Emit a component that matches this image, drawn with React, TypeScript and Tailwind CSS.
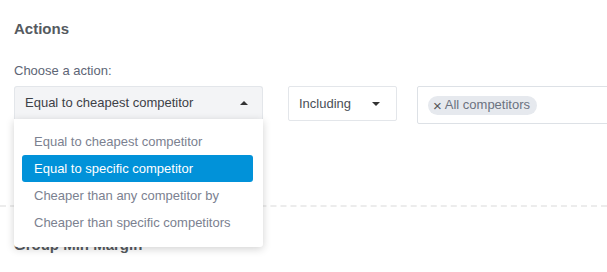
import React from 'react'

const options = [
  'Equal to cheapest competitor',
  'Equal to specific competitor',
  'Cheaper than any competitor by',
  'Cheaper than specific competitors',
]

export default function App() {
  return (
    <div className="w-[607px] h-[272px] overflow-hidden bg-white font-['Liberation_Sans',Arial,sans-serif]">
      <section className="px-[14px] pt-[19px]">
        <h2 className="text-[15px] font-bold text-[#555a60] leading-[20px]">Actions</h2>

        <p className="mt-[24px] text-[13px] text-[#5d6575] leading-[16px]">Choose a action:</p>

        <div className="mt-[7px] flex items-start">
          {/* action select with open menu */}
          <div className="relative w-[249px] shrink-0">
            <div className="h-[33px] flex items-center justify-between pl-[10px] pr-[14px] bg-[#f3f4f6] border border-[#e3e6ea] border-b-0 rounded-t-[3px] text-[13px] text-[#3d4147]">
              <span>Equal to cheapest competitor</span>
              <span className="w-0 h-0 border-l-[4px] border-r-[4px] border-b-[4px] border-l-transparent border-r-transparent border-b-[#333]"></span>
            </div>
            <ul className="absolute left-0 top-[33px] w-[249px] bg-white rounded-b-[3px] shadow-[0_2px_8px_rgba(0,0,0,0.18)] pl-[8px] pr-[10px] pt-[9px] pb-[11px] z-10">
              {options.map((o, i) => (
                <li
                  key={o}
                  className={
                    i === 1
                      ? 'h-[27px] flex items-center pl-[12px] rounded-[3px] bg-[#0192d9] text-white text-[13px]'
                      : 'h-[27px] flex items-center pl-[12px] text-[13px] text-[#7b8190]'
                  }
                >
                  {o}
                </li>
              ))}
            </ul>
          </div>

          <div className="ml-[25px] w-[109px] shrink-0 h-[35px] flex items-center justify-between pl-[10px] pr-[16px] border border-[#e3e6ea] rounded-[2px] text-[13px] text-[#4a4f57]">
            <span>Including</span>
            <span className="w-0 h-0 border-l-[4px] border-r-[4px] border-t-[4px] border-l-transparent border-r-transparent border-t-[#333]"></span>
          </div>

          <div className="ml-[20px] w-[220px] shrink-0 h-[38px] flex items-center pl-[10px] border border-[#dde1e6] rounded-[2px]">
            <span className="h-[19px] flex items-center gap-[3px] pl-[5px] pr-[7px] rounded-full bg-[#e6e9ee] text-[13px] text-[#6b7280]">
              <span className="text-[15px] leading-none text-[#555]">×</span>
              All competitors
            </span>
          </div>
        </div>
      </section>

      <div className="mt-[81px] border-t-[2px] border-dashed border-[#ececec]"></div>

      <section className="px-[14px] pt-[28px]">
        <h2 className="text-[15px] font-bold text-[#555a60] leading-[20px]">Group Min Margin</h2>
      </section>
    </div>
  )
}
